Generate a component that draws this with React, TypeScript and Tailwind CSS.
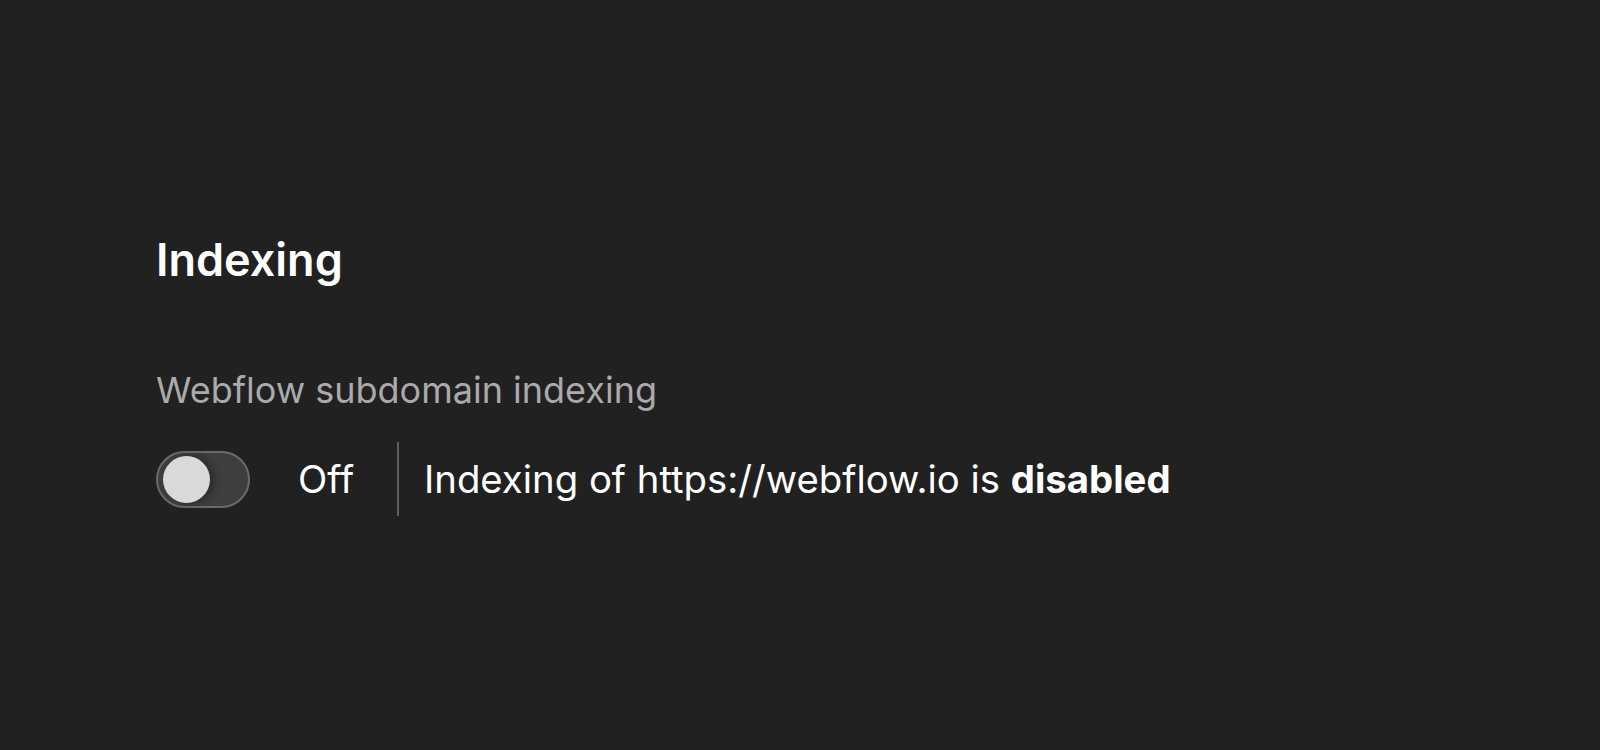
import { useState } from "react";

const Toggle = ({ on, onChange }: { on: boolean; onChange: (v: boolean) => void }) => {
  return (
    <button
      type="button"
      onClick={() => onChange(!on)}
      className={`relative h-[57px] w-[94px] shrink-0 rounded-full border-2 border-[#6a6a6a] bg-[#3e3e3e]`}>
      <span
        className={`absolute top-[3px] h-[47px] w-[47px] rounded-full bg-[#d9d9d9] shadow-[4px_0_8px_rgba(0,0,0,0.35)] transition-all ${
          on ? "left-[41px]" : "left-[5px]"
        }`}
      />
    </button>
  );
};

const App = () => {
  const [indexing, setIndexing] = useState(false);

  return (
    <div className="min-h-[750px] w-full bg-[#212121] font-['Inter',sans-serif] text-white">
      <div className="px-[156px] pt-[232px]">
        <h2 className="text-[45px] font-semibold leading-[56px]">Indexing</h2>

        <div className="mt-[78px] text-[36px] leading-[48px] text-[#aaaaaa]">
          Webflow subdomain indexing
        </div>

        <div className="mt-[28px] flex items-center">
          <Toggle on={indexing} onChange={setIndexing} />
          <span className="ml-[48px] w-[52px] text-[38.3px] leading-[48px]">
            {indexing ? "On" : "Off"}
          </span>
          <div className="ml-[47px] h-[74px] w-[2px] bg-[#5e5e5e]" />
          <p className="ml-[25px] text-[38.3px] leading-[48px]">
            Indexing of https://webflow.io is{" "}
            <span className="font-bold">{indexing ? "enabled" : "disabled"}</span>
          </p>
        </div>
      </div>
    </div>
  );
};

export default App;
